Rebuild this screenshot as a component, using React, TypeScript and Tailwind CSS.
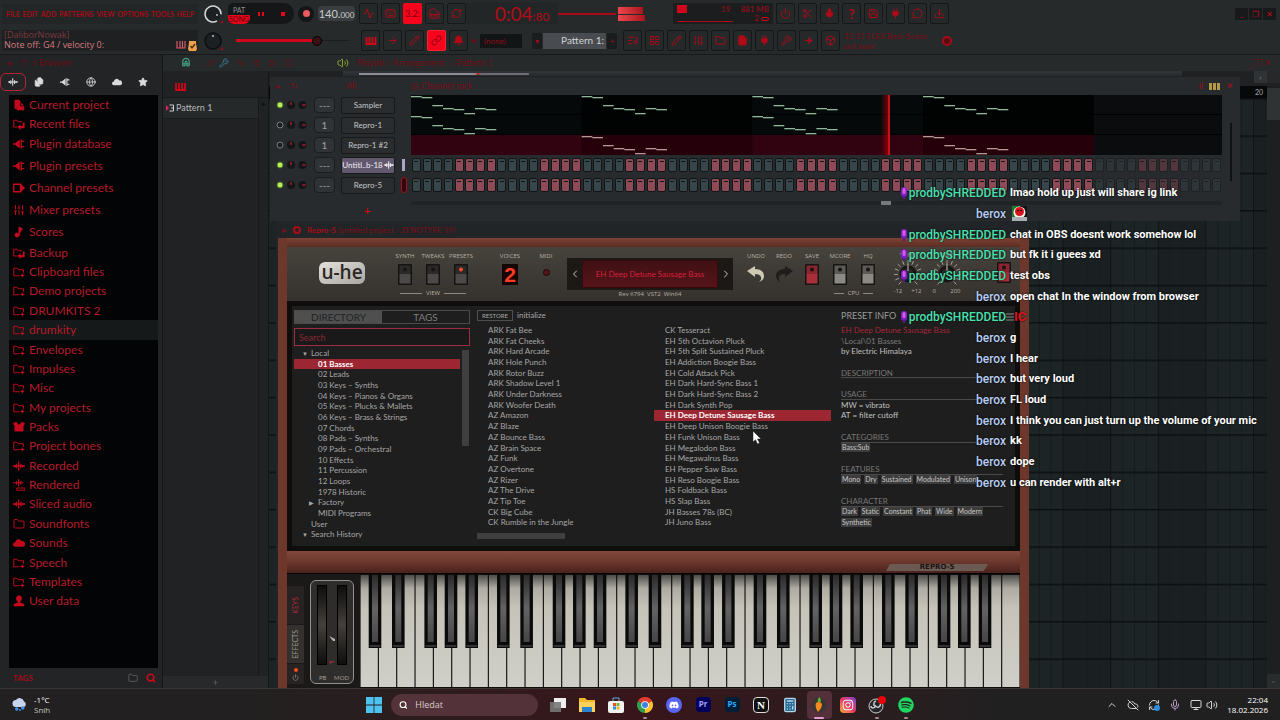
import React from 'react';
import type { ComponentType, ReactNode } from 'react';
import {
  Activity, ArrowRight, Bell, Box, Calculator, ChevronLeft, ChevronRight, ChevronUp, CloudOff,
  Download, File, Files, Folder, Globe, HelpCircle, Keyboard, LayoutGrid,
  Link, ListMusic, Magnet, MessageCircle, Mic, Monitor, Music2, Pencil, Piano, Plug, Power,
  Redo2, RefreshCw, Save, Scissors, Search, SlidersVertical, Square, Star, Undo2, Volume2, Wrench,
} from 'lucide-react';
import { FaDiscord, FaInstagram, FaSpotify } from 'react-icons/fa';

type Icon = ComponentType<{ className?: string }>;

interface BrowserItem {
  name: string;
  icon: Icon;
  solid?: boolean;
}

interface ChatLine {
  user: 'prodbySHREDDED' | 'berox';
  text?: string;
  extra?: 'emote' | 'glitch';
}

/* ---------- icons ---------- */

function KeysIcon({ className }: { className?: string }) {
  return (
    <svg viewBox="0 0 11 8" className={className}>
      <path d="M1 0v7h9V0M4 0v6M7 0v6" fill="none" stroke="currentColor" strokeWidth="1.800" />
    </svg>
  );
}

function WaveIcon({ className }: { className?: string }) {
  return (
    <svg viewBox="0 0 16 16" className={className}>
      <path d="M0 8h16M4.500 5v6M7.500 2v12M10.500 5v6M13 6.500v3M2.500 6.500v3" fill="none" stroke="currentColor" strokeWidth="1.700" />
    </svg>
  );
}

function RenderedIcon({ className }: { className?: string }) {
  return (
    <svg viewBox="0 0 16 16" className={className}>
      <path d="M0 5h14M4.500 2.500v5M7.500 0v10M10.500 2.500v5" fill="none" stroke="currentColor" strokeWidth="1.500" />
      <path d="M5 12h11v3H5z" fill="none" stroke="currentColor" strokeWidth="1.300" />
    </svg>
  );
}

function FolderMarkIcon({ className }: { className?: string }) {
  return (
    <svg viewBox="0 0 16 16" className={className}>
      <path d="M8.500 13H1V3h4.500L7 5h7v4" fill="none" stroke="currentColor" strokeWidth="1.300" />
      <path d="M12.500 10v5M10 12.500h5" stroke="currentColor" strokeWidth="1.400" />
    </svg>
  );
}

function FolderReturnIcon({ className }: { className?: string }) {
  return (
    <svg viewBox="0 0 16 16" className={className}>
      <path d="M6 12H1V3h4.500L7 5h5" fill="none" stroke="currentColor" strokeWidth="1.300" />
      <path d="M6 12l4-4v2.500h3V6h2.500v7.500H10V16z" fill="currentColor" />
    </svg>
  );
}

function PluginIcon({ className }: { className?: string }) {
  return (
    <svg viewBox="0 0 16 16" className={className}>
      <path d="M0 7h3l6-5v12L3 9H0z" fill="currentColor" />
      <path d="M11 2v12M11 4.500h4M11 11.500h4" fill="none" stroke="currentColor" strokeWidth="1.800" />
    </svg>
  );
}

function ChannelIcon({ className }: { className?: string }) {
  return (
    <svg viewBox="0 0 16 16" className={className}>
      <path d="M1 3h9v10H1z" fill="none" stroke="currentColor" strokeWidth="1.800" />
      <path d="M10 2l6 6-6 6z" fill="currentColor" />
    </svg>
  );
}

function PackIcon({ className }: { className?: string }) {
  return (
    <svg viewBox="0 0 16 16" className={className}>
      <path d="M0 3l4-2 4 4 4-4 4 2-2 4v7H2V7z" fill="currentColor" />
    </svg>
  );
}

function CloudIcon({ className }: { className?: string }) {
  return (
    <svg viewBox="0 0 16 16" className={className}>
      <path d="M3 13a3 3 0 010-6 4.500 4.500 0 018.500-1.500A3.800 3.800 0 0113 13z" fill="currentColor" />
    </svg>
  );
}

function UserIcon({ className }: { className?: string }) {
  return (
    <svg viewBox="0 0 16 16" className={className}>
      <circle cx="8" cy="4.500" r="3.800" fill="currentColor" />
      <path d="M6.500 7h3v3l5.500 2v3H1v-3l5.500-2z" fill="currentColor" />
    </svg>
  );
}

function PageIcon({ className }: { className?: string }) {
  return (
    <svg viewBox="0 0 16 16" className={className}>
      <path d="M2 1h6l2 2v2h1l4 4v6H5v-2H2z" fill="currentColor" />
      <path d="M10 5v4h5" fill="none" stroke="#030405" strokeWidth="1" />
    </svg>
  );
}

const mainFolders: BrowserItem[] = [
  { name: 'Plugin database', icon: PluginIcon },
  { name: 'Plugin presets', icon: PluginIcon },
  { name: 'Channel presets', icon: ChannelIcon },
  { name: 'Mixer presets', icon: SlidersVertical },
  { name: 'Scores', icon: Music2, solid: true },
];

const userFolders: BrowserItem[] = [
  { name: 'Backup', icon: FolderReturnIcon },
  { name: 'Clipboard files', icon: FolderMarkIcon },
  { name: 'Demo projects', icon: FolderMarkIcon },
  { name: 'DRUMKITS 2', icon: FolderMarkIcon },
  { name: 'drumkity', icon: FolderMarkIcon },
  { name: 'Envelopes', icon: FolderMarkIcon },
  { name: 'Impulses', icon: FolderMarkIcon },
  { name: 'Misc', icon: FolderMarkIcon },
  { name: 'My projects', icon: FolderMarkIcon },
  { name: 'Packs', icon: PackIcon },
  { name: 'Project bones', icon: FolderMarkIcon },
  { name: 'Recorded', icon: WaveIcon },
  { name: 'Rendered', icon: RenderedIcon },
  { name: 'Sliced audio', icon: WaveIcon },
  { name: 'Soundfonts', icon: Folder },
  { name: 'Sounds', icon: CloudIcon },
  { name: 'Speech', icon: FolderMarkIcon },
  { name: 'Templates', icon: FolderMarkIcon },
  { name: 'User data', icon: UserIcon },
];

const directory = [
  '01 Basses', '02 Leads', '03 Keys – Synths', '04 Keys – Pianos & Organs', '05 Keys – Plucks & Mallets',
  '06 Keys – Brass & Strings', '07 Chords', '08 Pads – Synths', '09 Pads – Orchestral', '10 Effects',
  '11 Percussion', '12 Loops', '1978 Historic',
];

const presetsLeft = [
  'ARK Fat Bee', 'ARK Fat Cheeks', 'ARK Hard Arcade', 'ARK Hole Punch', 'ARK Rotor Buzz', 'ARK Shadow Level 1',
  'ARK Under Darkness', 'ARK Woofer Death', 'AZ Amazon', 'AZ Blaze', 'AZ Bounce Bass', 'AZ Brain Space',
  'AZ Funk', 'AZ Overtone', 'AZ Rizer', 'AZ The Drive', 'AZ Tip Toe', 'CK Big Cube', 'CK Rumble in the Jungle',
];

const presetsRight = [
  'CK Tesseract', 'EH 5th Octavion Pluck', 'EH 5th Split Sustained Pluck', 'EH Addiction Boogie Bass',
  'EH Cold Attack Pick', 'EH Dark Hard-Sync Bass 1', 'EH Dark Hard-Sync Bass 2', 'EH Dark Synth Pop',
  'EH Deep Detune Sausage Bass', 'EH Deep Unison Boogie Bass', 'EH Funk Unison Bass', 'EH Megalodon Bass',
  'EH Megawalrus Bass', 'EH Pepper Saw Bass', 'EH Reso Boogie Bass', 'HS Foldback Bass', 'HS Slap Bass',
  'JH Basses 78s (BC)', 'JH Juno Bass',
];

const chat: ChatLine[] = [
  { user: 'prodbySHREDDED', text: 'lmao hold up just will share ig link' },
  { user: 'berox', extra: 'emote' },
  { user: 'prodbySHREDDED', text: 'chat in OBS doesnt work somehow lol' },
  { user: 'prodbySHREDDED', text: 'but fk it i guees xd' },
  { user: 'prodbySHREDDED', text: 'test obs' },
  { user: 'berox', text: 'open chat In the window from browser' },
  { user: 'prodbySHREDDED', extra: 'glitch' },
  { user: 'berox', text: 'g' },
  { user: 'berox', text: 'I hear' },
  { user: 'berox', text: 'but very loud' },
  { user: 'berox', text: 'FL loud' },
  { user: 'berox', text: 'I think you can just turn up the volume of your mic' },
  { user: 'berox', text: 'kk' },
  { user: 'berox', text: 'dope' },
  { user: 'berox', text: 'u can render with alt+r' },
];

/* ---------- toolbar ---------- */

function ToolButton({ label, icon: Glyph, active = false, solid = false }: { label: string; icon: Icon; active?: boolean; solid?: boolean }) {
  return (
    <button
      aria-label={label}
      className={`flex h-[21px] w-[19px] shrink-0 items-center justify-center rounded-xs border ${
        active ? 'border-[#ff2233] bg-[#f5041c] text-[#7a0010]' : 'border-[#151718] bg-[#25292a] text-[#b00a18]'
      }`}
    >
      <Glyph className={`size-[11px] ${solid ? 'fill-current' : ''}`} />
    </button>
  );
}

function RoundKnob({ bright = false }: { bright?: boolean }) {
  return (
    <div className="flex w-[30px] shrink-0 justify-center">
      <svg viewBox="0 0 22 22" className="size-[22px]">
        <circle cx="11" cy="11" r="8" fill="#1d2022" stroke={bright ? '#d4d8da' : '#0d0f10'} strokeWidth="1.6" strokeDasharray={bright ? '42 9' : undefined} transform="rotate(60 11 11)" />
        <circle cx={bright ? 15 : 11} cy={bright ? 12 : 6} r="0.9" fill="#c9cdd0" />
        <path d="M18 20l3-3v3z" fill="#a40b17" />
      </svg>
    </div>
  );
}

function Toolbar() {
  return (
    <header className="flex h-[55px] shrink-0 flex-col justify-center gap-1.5 border-b border-[#17191a] bg-[#272a2b] text-[#a30c18]">
      <div className="flex h-[21px] items-center">
        <nav className="ml-0.5 flex w-[196px] shrink-0 justify-between bg-[#232627] py-0.5 pr-1 pl-1 text-[7px] leading-4 font-bold">
          {['FILE', 'EDIT', 'ADD', 'PATTERNS', 'VIEW', 'OPTIONS', 'TOOLS', 'HELP'].map((item) => (
            <a key={item} href="#menu" className="text-[#a30c18]">{item}</a>
          ))}
        </nav>
        <RoundKnob bright />
        <div className="flex h-[21px] w-[66px] shrink-0 items-stretch rounded-l-md rounded-r-xl bg-[#151617]">
          <button className="flex w-[22px] flex-col justify-end text-center text-[7px] leading-[9px]">
            <span className="text-[#8d8f91]">PAT</span>
            <span className="rounded-b-md bg-[#e3061b] text-[#6b0009]">SONG</span>
          </button>
          <button aria-label="Pause" className="flex flex-1 items-center justify-center gap-0.5">
            <span className="h-1 w-0.5 bg-[#e3061b]" />
            <span className="h-1 w-0.5 bg-[#e3061b]" />
          </button>
          <button aria-label="Stop" className="flex flex-1 items-center justify-center">
            <span className="size-1 bg-[#e3061b]" />
          </button>
        </div>
        <button aria-label="Record" className="mx-1 flex size-4 shrink-0 items-center justify-center rounded-full bg-[#141516]">
          <span className="size-[7px] rounded-full bg-[#ef5a62]" />
        </button>
        <div className="mr-1 flex h-[15px] w-[37px] shrink-0 items-baseline justify-center rounded-sm bg-[#3b3e40] text-[11px] leading-[15px] text-[#c9cccd]">
          140.<span className="text-[8px]">000</span>
        </div>
        <div className="flex w-[107px] shrink-0 gap-[3px]">
          <ToolButton label="Metronome" icon={Activity} />
          <ToolButton label="Wait for input" icon={Keyboard} />
          <button className="flex h-[21px] w-[19px] items-center justify-center rounded-xs bg-[#f5041c] text-[9px] text-[#7a0010]">3.2:</button>
          <ToolButton label="Step edit" icon={Piano} />
          <ToolButton label="Loop record" icon={RefreshCw} />
        </div>
        <div className="flex h-[21px] w-[92px] shrink-0 items-baseline justify-center bg-[#222627] pl-5 text-[19px] leading-[21px] text-[#b50b18]">
          0:04<span className="text-xs">:80</span>
        </div>
        <div className="flex w-[115px] shrink-0 items-center">
          <div className="h-0.5 w-[58px] bg-[#a50b16]" />
          <div className="ml-0.5 flex flex-col gap-px">
            <div className="h-[7px] w-[25px] bg-gradient-to-r from-[#f0464c] to-[#a8141e]" />
            <div className="h-[6px] w-[27px] bg-gradient-to-r from-[#f0464c] to-[#a8141e]" />
          </div>
        </div>
        <div className="relative mr-[3px] flex h-[21px] w-[100px] shrink-0 items-start justify-between bg-[#1b1d1f] px-1 py-0.5 text-[8px] leading-[9px]">
          <span className="h-2 w-2.5 bg-[#d0061a]" />
          <span className="ml-6">19</span>
          <span className="text-right">881 MB<br />2 <span className="inline-block h-1 w-2 rounded-full border border-[#d0061a]" /></span>
          <span className="absolute bottom-0.5 left-1 h-px w-14 bg-[#b00a18]" />
        </div>
        <div className="flex shrink-0 gap-[3px]">
          <ToolButton label="Power" icon={Power} />
          <ToolButton label="Cut" icon={Scissors} />
          <ToolButton label="Microphone" icon={Mic} solid />
          <button className="flex h-[21px] w-[19px] items-center justify-center rounded-xs border border-[#151718] bg-[#25292a] text-[13px] leading-4 font-bold text-[#b00a18]">?</button>
          <ToolButton label="Save" icon={Save} />
          <ToolButton label="Render" icon={Plug} solid />
          <ToolButton label="Chat" icon={MessageCircle} />
          <ToolButton label="Download" icon={Download} />
        </div>
        <div className="mr-1 ml-auto flex gap-px">
          {['_', '❐', '✕'].map((glyph) => (
            <button key={glyph} className="flex h-3 w-[13px] items-center justify-center bg-[#17191a] text-[8px] text-[#c00b1a]">{glyph}</button>
          ))}
        </div>
      </div>

      <div className="flex h-[21px] items-center">
        <div className="relative ml-0.5 h-[21px] w-[196px] shrink-0 bg-[#1e2021] pl-0.5 text-[9px] leading-[10px] [font-family:'Open_Sans',sans-serif]">
          <p className="text-[#7c3940]">[DaliborNowak]</p>
          <p className="text-[#d67b81]">Note off: G4 / velocity 0:</p>
          <svg viewBox="0 0 22 14" className="absolute right-0 bottom-0 h-3.5 w-[22px]">
            <path d="M1 4v7h8V4M4 4v7M6.500 4v7" fill="none" stroke="#d65a68" strokeWidth="1.2" />
            <path d="M13 4h7v2l1 6-1 2h-7l-1-2 1-6z" fill="#f0a04a" />
            <path d="M14.500 9l1.500 2 3-4" fill="none" stroke="#4a2a12" strokeWidth="1.300" />
          </svg>
        </div>
        <RoundKnob />
        <label className="relative mr-1 flex h-[21px] w-[129px] shrink-0 items-center px-2">
          <input aria-label="Main volume" type="range" defaultValue={70} className="absolute inset-0 opacity-0" />
          <span className="h-[3px] w-[76px] bg-[#d0061a]" />
          <span className="size-2.5 rounded-full border border-black bg-[#3a1216]" />
          <span className="h-px flex-1 bg-[#1a1c1d]" />
        </label>
        <div className="flex w-[107px] shrink-0 gap-[3px]">
          <button aria-label="Piano roll keys" className="flex h-[21px] w-[19px] items-center justify-center rounded-xs border border-[#151718] bg-[#25292a] text-[#d0061a]">
            <KeysIcon className="h-2 w-3" />
          </button>
          <ToolButton label="Forward" icon={ArrowRight} />
          <ToolButton label="Draw" icon={Pencil} />
          <ToolButton label="Link" icon={Link} active />
          <ToolButton label="Stamp" icon={Bell} solid />
        </div>
        <div className="mx-1 flex w-14 shrink-0 items-center gap-1">
          <span className="size-1 rounded-full bg-[#6a0a12]" />
          <select aria-label="Snap" className="h-3.5 w-[42px] appearance-none bg-[#131415] pl-1 text-[8px] leading-[14px] text-[#8d0c16]">
            <option>(none)</option>
          </select>
        </div>
        <button className="h-4 w-[10px] shrink-0 rounded-xs bg-[#1a1c1e] text-[8px]">▾</button>
        <button className="mx-px flex h-4 w-[63px] shrink-0 items-center justify-end bg-[#484b4f] pr-0.5 text-[10px] text-[#cfd2d4]">Pattern 1:</button>
        <button className="h-4 w-[10px] shrink-0 rounded-xs bg-[#1a1c1e] text-[8px]">+</button>
        <div className="ml-1.5 flex shrink-0 gap-[3px]">
          <ToolButton label="Playlist" icon={ListMusic} />
          <ToolButton label="Channel rack" icon={LayoutGrid} />
          <ToolButton label="Piano roll" icon={Pencil} />
          <ToolButton label="Mixer" icon={SlidersVertical} />
          <ToolButton label="Browser" icon={Folder} />
          <ToolButton label="Open" icon={File} solid />
          <ToolButton label="Plugins" icon={Plug} solid />
          <ToolButton label="Tools" icon={Wrench} />
          <ToolButton label="Touch" icon={ArrowRight} solid />
          <ToolButton label="Close all" icon={Box} />
        </div>
        <div className="ml-1 flex w-[108px] shrink-0 items-center justify-between text-[8px] leading-[10px] text-[#7c0b15]">
          <p>12.11 FLEX Beat-Scene<br />out now!</p>
          <span className="size-2.5 rounded-full border-2 border-[#a30c18] bg-[#5a0a12]" />
        </div>
      </div>
    </header>
  );
}

/* ---------- browser ---------- */

function FolderRow({ item, selected = false }: { item: BrowserItem; selected?: boolean }) {
  const Glyph = item.icon;
  return (
    <button className={`flex w-full items-center gap-1 pl-1 text-left text-xs leading-4 ${selected ? 'bg-[#16191a]' : ''}`}>
      <Glyph className={`size-3 shrink-0 text-[#c20a1c] ${item.solid ? 'fill-current' : ''}`} />
      {item.name}
    </button>
  );
}

function Browser() {
  const tabs: Icon[] = [WaveIcon, Files, PluginIcon, Globe, CloudIcon, Star];
  return (
    <aside className="flex w-[163px] shrink-0 flex-col border-r border-[#141617] bg-[#222426] text-[#b51b2a]">
      <div className="h-4 shrink-0 pl-2 text-[9px] leading-4 text-[#6b0c14]">▸ &nbsp; ↑ &nbsp;≡ Browser</div>
      <div className="flex h-6 shrink-0 items-center pb-0.5">
        {tabs.map((Glyph, i) => (
          <button
            key={i}
            aria-label={`Tab ${i + 1}`}
            className={`flex h-[18px] w-[26px] items-center justify-center text-[#d9dbdc] ${i === 0 ? 'rounded-md border border-[#b52436]' : ''}`}
          >
            <Glyph className={`size-2.5 ${Glyph === Files || Glyph === Star ? 'fill-current' : ''}`} />
          </button>
        ))}
      </div>
      <div className="mr-1 ml-[9px] min-h-0 flex-1 overflow-hidden bg-[#030405]">
        <div className="grid h-[38px] auto-rows-fr">
          <FolderRow item={{ name: 'Current project', icon: PageIcon }} />
          <FolderRow item={{ name: 'Recent files', icon: FolderReturnIcon }} />
        </div>
        <div className="grid h-[110px] auto-rows-fr">
          {mainFolders.map((item) => <FolderRow key={item.name} item={item} />)}
        </div>
        <div className="grid h-[368px] auto-rows-fr">
          {userFolders.map((item) => <FolderRow key={item.name} item={item} selected={item.name === 'drumkity'} />)}
        </div>
      </div>
      <div className="mr-1 ml-[9px] flex h-5 shrink-0 items-center gap-2 pl-1 text-[8px]">
        <span className="mr-auto font-bold text-[#a30c18]">TAGS</span>
        <Folder className="size-2.5 text-[#606466]" />
        <Search className="mr-0.5 size-2.5 text-[#d0061a]" strokeWidth={4} />
      </div>
    </aside>
  );
}

function PatternPicker() {
  return (
    <section className="flex w-[106px] shrink-0 flex-col border-r border-[#141617] bg-[#202224]">
      <div className="flex h-[27px] shrink-0 items-end border-b border-[#17191a] pb-1.5 pl-3 text-[#d0061a]">
        <KeysIcon className="h-2 w-[11px]" />
      </div>
      <div className="flex min-h-0 flex-1">
        <div className="flex-1">
          <div className="flex h-[21px] items-center gap-0.5 border-b border-[#1a1c1d] bg-[#26292a] pl-[3px] text-[9px] text-[#b4b7b9]">
            <svg viewBox="0 0 8 8" className="size-2">
              <path d="M0 1l3 3-3 3z" fill="#e0245a" />
              <path d="M3.500 1h4v6h-4M5 4h2" fill="none" stroke="#d0d0d0" />
            </svg>
            Pattern 1
          </div>
        </div>
        <div className="w-2.5 border-l border-[#17191a] text-center text-[7px] text-[#0c0d0e]">▸</div>
      </div>
      <div className="h-3 shrink-0 bg-[#27292b] text-center text-[10px] leading-3 text-[#616466]">+</div>
    </section>
  );
}

/* ---------- channel rack ---------- */

const STEP = 32 / 3;
const noteHeights = [1, 2, 10, 13, 14, 18, 13, 14];

function RackPreview() {
  const rows = [[0, 16, 32, 48], [0, 32], [16, 48]];
  return (
    <svg viewBox="0 0 811 60" preserveAspectRatio="none" className="block h-[60px] w-full">
      <rect width="811" height="60" fill="#0a0c0e" />
      {[0, 1, 2, 3].map((bar) => (
        <g key={bar}>
          <rect x={bar * 170.67} width="170.67" height="39" fill={bar % 2 ? '#010202' : '#06090a'} />
          <rect x={bar * 170.67} y="40" width="170.67" height="20" fill={bar % 2 ? '#25000a' : '#31020f'} />
        </g>
      ))}
      <path d="M0 19.500h811M0 39.500h811" stroke="#000" />
      {rows.map((starts, row) =>
        starts.map((start) =>
          noteHeights.map((y, i) => (
            <rect key={`${row}-${start}-${i}`} x={(start + i) * STEP} y={row * 20 + y} width={STEP} height="1.300" fill={row === 2 ? '#b59a94' : '#8fb89a'} />
          )),
        ),
      )}
      <defs>
        <linearGradient id="playhead">
          <stop offset="0" stopColor="#d00000" stopOpacity="0" />
          <stop offset="1" stopColor="#d00000" stopOpacity="0.6" />
        </linearGradient>
      </defs>
      <rect x="470" width="8" height="60" fill="url(#playhead)" />
      <rect x="477" width="2" height="60" fill="#c8101a" />
    </svg>
  );
}

function StepRow() {
  return (
    <div className="flex h-5 items-center">
      {Array.from({ length: 76 }, (_, i) => {
        const red = Math.floor(i / 4) % 2 === 1;
        return (
          <div key={i} className={`flex flex-1 justify-center ${i >= 64 ? 'opacity-40' : ''}`}>
            <button
              aria-label={`Step ${i + 1}`}
              className={`flex h-3.5 w-[9px] justify-center rounded-xs border border-[#121415] pt-0.5 ${red ? 'bg-[#8f4a57]' : 'bg-[#37464a]'}`}
            >
              <span className="h-px w-1 bg-[#121415]" />
            </button>
          </div>
        );
      })}
    </div>
  );
}

function ChannelRow({ name, on, target, audio = false }: { name: string; on: boolean; target: string; audio?: boolean }) {
  return (
    <div className="flex h-5 items-center">
      <svg viewBox="0 0 38 14" className="ml-1.5 h-3.5 w-[38px] shrink-0">
        <circle cx="4" cy="7" r="3" fill={on ? '#b9ef56' : '#1d1f21'} stroke={on ? '#48702a' : '#777b7d'} />
        <circle cx="15" cy="7" r="4" fill="#151618" />
        <path d="M15 7V4" stroke="#d81b2c" strokeWidth="1.200" />
        <circle cx="26.500" cy="7" r="4" fill="#151618" />
        <path d="M26.500 7h3" stroke="#d81b2c" strokeWidth="1.200" />
      </svg>
      <span className="flex h-4 w-[21px] shrink-0 items-center justify-center rounded-sm border border-[#1a1c1d] bg-[#303335] text-[10px] text-[#9ea1a3]">{target}</span>
      <button
        className={`ml-1.5 flex h-[17px] w-[54px] shrink-0 items-center justify-center gap-px rounded-xs border border-[#17191a] text-[8px] whitespace-nowrap ${
          audio ? 'bg-[#62596f] text-[#eeebf3]' : 'bg-[#2a2c2e] text-[#c2c5c7]'
        }`}
      >
        {name}
        {audio && <WaveIcon className="size-2.5" />}
      </button>
    </div>
  );
}

function ChannelRack() {
  return (
    <section className="absolute top-1.5 left-px z-10 h-[144px] w-[970px] bg-[#282b2d]">
      <div className="flex h-[18px] items-center text-[9px] text-[#7a0e18]">
        <span className="w-[76px] pl-1.5">▸ &nbsp;&nbsp; ↻</span>
        <span className="w-[65px]">All</span>
        <span>◎ Channel rack</span>
        <span className="mr-1.5 ml-auto flex items-center gap-1.5 text-[#a30c18]">
          ıl
          <svg viewBox="0 0 11 7" className="h-[7px] w-[11px]">
            <path d="M0 0h3v7H0zM4 0h3v7H4zM8 0h3v7H8z" fill="#b59a45" />
          </svg>
          ✕
        </span>
      </div>
      <div className="flex">
        <div className="w-[130px] shrink-0">
          <ChannelRow name="Sampler" on target="---" />
          <ChannelRow name="Repro-1" on={false} target="1" />
          <ChannelRow name="Repro-1 #2" on={false} target="1" />
          <ChannelRow name="Untitl..b-18" on target="---" audio />
          <ChannelRow name="Repro-5" on target="---" />
        </div>
        <div className="flex w-[11px] shrink-0 flex-col items-center pt-16">
          <span className="mr-1 h-3 w-[3px] bg-[#aaa5c4]" />
          <span className="mt-1.5 mr-1 h-4 w-1.5 rounded-sm border border-[#a01320] bg-[#33070d]" />
        </div>
        <div className="min-w-0 flex-1">
          <RackPreview />
          <StepRow />
          <StepRow />
          <div className="mt-1.5 h-1 bg-[#212325]">
            <div className="ml-[58%] h-1 w-2.5 bg-[#77797b]" />
          </div>
        </div>
        <div className="flex w-[18px] shrink-0 justify-center pt-7">
          <span className="h-[58px] w-0.5 bg-[#111213]" />
        </div>
      </div>
      <div className="pl-[94px] text-[11px] leading-3 font-bold text-[#d00a18]">+</div>
    </section>
  );
}

/* ---------- synth window ---------- */

function Switch({ label, tone = 'dark', lit = false }: { label: string; tone?: 'dark' | 'light' | 'red'; lit?: boolean }) {
  const body = tone === 'dark' ? '#4b4a48' : tone === 'light' ? '#8b8983' : '#a82e3a';
  const top = tone === 'dark' ? '#2b2a29' : tone === 'light' ? '#5c5a56' : '#8a2530';
  return (
    <button className="flex w-7 flex-col items-center gap-0.5 text-[6px] leading-[10px] text-[#b5b1a7]">
      {label}
      <svg viewBox="0 0 14 21" className="mt-px h-[21px] w-3.5">
        <rect width="14" height="21" rx="1" fill="#151412" />
        <rect x="1.500" y="1.500" width="11" height="9" fill={top} />
        <rect x="1.500" y="10" width="11" height="9.500" fill={body} />
        <circle cx="7" cy="5.500" r="2" fill={lit ? '#ff4a26' : '#161514'} />
      </svg>
    </button>
  );
}

function Rule({ text, className }: { text: string; className: string }) {
  return (
    <div className={`flex items-center gap-1 text-[6px] leading-[8px] text-[#b5b1a7] ${className}`}>
      <span className="h-px flex-1 bg-[#8d897f]" />
      {text}
      <span className="h-px flex-1 bg-[#8d897f]" />
    </div>
  );
}

function DialKnob({ label, low, high }: { label: string; low: string; high: string }) {
  return (
    <div className="flex w-[39px] flex-col items-center text-[6px] leading-[8px] text-[#b5b1a7]">
      <span>{label}</span>
      <svg viewBox="0 0 30 28" className="h-7 w-[30px]">
        {Array.from({ length: 13 }, (_, i) => (
          <path key={i} d="M15 1v4" stroke="#b5b0a5" strokeWidth="0.800" transform={`rotate(${-138 + i * 23} 15 15)`} />
        ))}
        <circle cx="15" cy="15" r="8.500" fill="#191817" />
        <circle cx="15" cy="15" r="5.500" fill="#2b2a28" />
        <path d="M15 12V5" stroke="#c8c3b8" />
      </svg>
      <span className="flex w-7 justify-between"><span>{low}</span><span>{high}</span></span>
    </div>
  );
}

function CurvedArrow({ className }: { className: string }) {
  return (
    <svg viewBox="0 0 18 18" className={`size-[18px] ${className}`}>
      <path d="M0 6l8-5v3c6 0 9 3 9 7 0 3-2 5-5 6 2-2 2.500-3 2-5-.6-2-3-3-6-3v3z" fill="currentColor" />
    </svg>
  );
}

function SynthPanel() {
  return (
    <div className="flex h-[54px] shrink-0 items-start bg-gradient-to-b from-[#46423c] to-[#35312d] pt-1 [font-family:'Open_Sans',sans-serif]">
      <div className="mt-[11px] ml-8 flex h-[22px] w-[46px] shrink-0 items-center justify-center rounded-md bg-gradient-to-br from-[#e2e0db] to-[#a9a6a0] pb-0.5 text-[19px] leading-5 font-semibold text-[#2b2825]">
        u-he
      </div>
      <div className="ml-[26px] shrink-0">
        <div className="flex">
          <Switch label="SYNTH" />
          <Switch label="TWEAKS" />
          <Switch label="PRESETS" lit />
        </div>
        <Rule text="VIEW" className="mx-[9px] mt-1" />
      </div>
      <div className="ml-5 flex w-[30px] shrink-0 flex-col items-center gap-[3px] text-[6px] leading-[10px] text-[#b5b1a7]">
        VOICES
        <span className="flex h-[21px] w-4 items-center justify-center bg-[#150505] text-[21px] leading-5 font-bold text-[#ff3b22] [font-family:'Liberation_Sans',sans-serif]">2</span>
      </div>
      <div className="ml-1.5 flex w-[30px] shrink-0 flex-col items-center gap-2 text-[6px] leading-[10px] text-[#b5b1a7]">
        MIDI
        <span className="size-[7px] rounded-full border border-[#1a0808] bg-[#5a151b]" />
      </div>
      <div className="mt-[7px] ml-1.5 w-[166px] shrink-0 text-center">
        <div className="flex h-[32px] items-center bg-[#1b1816] text-[#c9c5bc]">
          <button aria-label="Previous preset" className="flex w-[15px] justify-center"><ChevronLeft className="size-3" /></button>
          <div className="flex h-7 flex-1 items-center justify-center border border-[#37090d] bg-gradient-to-b from-[#401014] to-[#561419] text-[8px] text-[#d81f3c] [font-family:'Lato',sans-serif]">
            EH Deep Detune Sausage Bass
          </div>
          <button aria-label="Next preset" className="flex w-[15px] justify-center"><ChevronRight className="size-3" /></button>
        </div>
        <p className="text-[6px] leading-[8px] text-[#b5b1a7]">Rev 6794 &nbsp;VST2 &nbsp;Win64</p>
      </div>
      <div className="ml-[9px] flex shrink-0 text-[6px] leading-[10px] text-[#b5b1a7]">
        <button className="flex w-7 flex-col items-center gap-1">UNDO<CurvedArrow className="text-[#cfc8b4]" /></button>
        <button className="flex w-7 flex-col items-center gap-1">REDO<CurvedArrow className="-scale-x-100 text-[#1f1d1b]" /></button>
      </div>
      <div className="shrink-0">
        <div className="flex">
          <Switch label="SAVE" tone="red" />
          <Switch label="MCORE" tone="light" />
          <Switch label="HQ" tone="light" />
        </div>
        <Rule text="CPU" className="mt-1 mr-[9px] ml-9" />
      </div>
      <div className="ml-1.5 flex shrink-0">
        <DialKnob label="TUNE" low="-12" high="+12" />
        <DialKnob label="FINE" low="0" high="200" />
      </div>
      <div className="ml-6 pt-2.5">
        <Switch label="" tone="red" />
      </div>
    </div>
  );
}

function Chips({ items }: { items: string[] }) {
  return (
    <div className="flex items-center gap-[3px]">
      {items.map((item) => (
        <span key={item} className="bg-[#3c3c3c] px-px text-[7px] leading-[9px] text-[#c6c6c6]">{item}</span>
      ))}
    </div>
  );
}

function InfoHeading({ children }: { children: ReactNode }) {
  return <h3 className="w-[162px] border-b border-[#4a4a4a] text-[8px] text-[#777]">{children}</h3>;
}

function PresetInfo() {
  return (
    <div className="ml-2.5 flex-1">
      <h2 className="h-[15px] text-[9px] leading-3 text-[#999]">PRESET INFO</h2>
      <div className="grid h-[203px] auto-rows-fr text-[8px] leading-[10px] whitespace-nowrap text-[#c0c0c0]">
        <p className="text-[#a82639]">EH Deep Detune Sausage Bass</p>
        <p className="text-[#7a7a7a]">\Local\01 Basses</p>
        <p>by Electric Himalaya</p>
        <p />
        <InfoHeading>DESCRIPTION</InfoHeading>
        <p />
        <InfoHeading>USAGE</InfoHeading>
        <p>MW = vibrato</p>
        <p>AT = filter cutoff</p>
        <p />
        <InfoHeading>CATEGORIES</InfoHeading>
        <Chips items={['Bass:Sub']} />
        <p />
        <InfoHeading>FEATURES</InfoHeading>
        <Chips items={['Mono', 'Dry', 'Sustained', 'Modulated', 'Unison']} />
        <p />
        <InfoHeading>CHARACTER</InfoHeading>
        <Chips items={['Dark', 'Static', 'Constant', 'Phat', 'Wide', 'Modern']} />
        <Chips items={['Synthetic']} />
      </div>
    </div>
  );
}

function PresetColumn({ items, selected }: { items: string[]; selected?: string }) {
  return (
    <ul className="grid h-[203px] w-[177px] auto-rows-fr">
      {items.map((item) => (
        <li key={item} className={`pl-[11px] ${item === selected ? 'bg-[#9c2733] font-bold text-white' : ''}`}>{item}</li>
      ))}
    </ul>
  );
}

function PresetBrowser() {
  return (
    <div className="flex min-h-0 flex-1 border-[5px] border-[#0e0d0c] bg-[#1e1e1e] pt-1 pl-0.5 text-[8px] leading-[10px] text-[#a6a6a6] [font-family:'Lato',sans-serif]">
      <div className="w-44 shrink-0">
        <div className="flex h-3.5 border border-[#4b4b4b] text-[10px] leading-3">
          <button className="flex-1 bg-[#4f4f4f] text-[#222]">DIRECTORY</button>
          <button className="flex-1 text-[#7d7d7d]">TAGS</button>
        </div>
        <input aria-label="Search presets" placeholder="Search" className="mt-1 block h-[18px] w-full border border-[#9c2c42] bg-[#191919] px-1 text-[9px] leading-4 outline-none placeholder:text-[#8c2638]" />
        <div className="mt-0.5 flex">
          <ul className="grid h-[192px] w-[166px] auto-rows-fr">
            <li className="pl-2"><span className="inline-block w-[9px] text-[6px]">▼</span>Local</li>
            {directory.map((item, i) => (
              <li key={item} className={`pl-6 ${i === 0 ? 'bg-[#9c2733] font-bold text-white' : ''}`}>{item}</li>
            ))}
            <li className="pl-[15px]"><span className="inline-block w-[9px] text-[6px]">▶</span>Factory</li>
            <li className="pl-6">MIDI Programs</li>
            <li className="pl-[17px]">User</li>
            <li className="pl-2"><span className="inline-block w-[9px] text-[6px]">▼</span>Search History</li>
          </ul>
          <div className="mt-0.5 ml-0.5 h-24 w-[7px] bg-[#3f3f3f]" />
        </div>
      </div>
      <div className="ml-[7px] shrink-0">
        <div className="flex h-[15px] items-start gap-1">
          <button className="h-[11px] w-9 border border-[#4f4f4f] text-[6px] leading-[9px]">RESTORE</button>
          initialize
        </div>
        <div className="flex">
          <PresetColumn items={presetsLeft} />
          <PresetColumn items={presetsRight} selected="EH Deep Detune Sausage Bass" />
        </div>
        <div className="mt-[5px] h-[6px] w-[88px] bg-[#3f3f3f]" />
      </div>
      <PresetInfo />
    </div>
  );
}

const OCTAVE = 128.33;
const blackOffsets = [15, 38.3, 70.7, 91, 111.7];

function PianoKeys() {
  return (
    <svg viewBox="0 0 660 114" preserveAspectRatio="none" className="h-full min-w-0 flex-1">
      <defs>
        <linearGradient id="ivory" x2="0" y2="1">
          <stop offset="0" stopColor="#4d4c48" />
          <stop offset="0.120" stopColor="#aeaca2" />
          <stop offset="0.300" stopColor="#c6c4b9" />
          <stop offset="1" stopColor="#d0cfc8" />
        </linearGradient>
        <linearGradient id="ebony" x2="0" y2="1">
          <stop offset="0" stopColor="#2a2a2a" />
          <stop offset="0.500" stopColor="#636363" />
          <stop offset="1" stopColor="#454545" />
        </linearGradient>
      </defs>
      <rect width="660" height="114" fill="#0e0e0d" />
      {Array.from({ length: 36 }, (_, i) => (
        <rect key={i} x={i * 18.333 + 0.600} y="1" width="17.200" height="112" fill="url(#ivory)" />
      ))}
      {[0, 1, 2, 3, 4].map((octave) =>
        blackOffsets.map((offset) => (
          <g key={`${octave}-${offset}`} transform={`translate(${octave * OCTAVE + offset - 6.300} 0)`}>
            <rect width="12.600" height="74" fill="#0a0a0a" />
            <rect x="3.300" y="1" width="6" height="67" fill="url(#ebony)" />
            <rect x="1" y="71" width="10.600" height="2" fill="#333" />
          </g>
        )),
      )}
    </svg>
  );
}

function KeyboardSection() {
  return (
    <div className="flex h-[114px] shrink-0 bg-[#1a1918] text-[7px] text-[#9e9b95]">
      <div className="flex w-[17px] shrink-0 flex-col gap-px py-3 pb-1">
        <button className="flex h-[38px] items-center justify-center bg-[#262322] text-[#b52a38] [writing-mode:sideways-lr]">KEYS</button>
        <button className="flex h-[38px] items-center justify-center bg-[#33302d] [writing-mode:sideways-lr]">EFFECTS</button>
        <button aria-label="Effects power" className="flex flex-1 flex-col items-center justify-center gap-0.5 bg-[#262322]">
          <span className="size-1 rounded-full bg-[#ff4a20]" />
          <Power className="size-[7px]" />
        </button>
      </div>
      <div className="mx-[6px] mt-1.5 mb-1 flex w-[44px] shrink-0 flex-col justify-between rounded-md border border-[#93918d] bg-[#2f2d2b] px-1 pt-1">
        <div className="flex justify-between px-0.5">
          <span className="h-[80px] w-2.5 border border-black bg-gradient-to-b from-[#0f0e0d] via-[#45413c] to-[#0f0e0d]" />
          <svg viewBox="0 0 8 80" className="h-20 w-2">
            <path d="M1 51l6 3v2H5z" fill="#b5b2ab" />
            <path d="M1 76h6l-5 3z" fill="#8e2a33" />
          </svg>
          <span className="h-[80px] w-2.5 border border-black bg-gradient-to-b from-[#0f0e0d] via-[#45413c] to-[#0f0e0d]" />
        </div>
        <div className="flex justify-between text-[6px] leading-[11px]"><span className="pl-1">PB</span><span>MOD</span></div>
      </div>
      <PianoKeys />
    </div>
  );
}

function SynthWindow() {
  return (
    <section className="absolute top-[150px] bottom-0 left-[7px] z-20 flex w-[753px] flex-col bg-[#222527]">
      <div className="flex h-[17px] shrink-0 items-center gap-1.5 pl-1.5 text-[9px] text-[#7a0e18]">
        <span>▸</span>
        <span className="size-2 rounded-full border-2 border-[#b00a18]" />
        <span className="text-[8px]"><b className="text-[#a30c18]">Repro-5</b> (untitled project - ZENOTYPE 19)</span>
      </div>
      <div className="ml-0.5 flex min-h-0 flex-1 flex-col border-x-[9px] border-[#6d372c] bg-[#120e0c]">
        <div className="h-[9px] shrink-0 bg-gradient-to-b from-[#7d4334] to-[#5c2c22]" />
        <SynthPanel />
        <PresetBrowser />
        <div className="relative h-[23px] shrink-0 border-b border-black bg-gradient-to-b from-[#83493c] via-[#6b372c] to-[#4a221b]">
          <div className="absolute right-8 bottom-0.5 h-[7px] w-[102px] bg-[#6a5a52] text-center text-[7px] leading-[7px] font-bold text-[#1a1412] [clip-path:polygon(4%_0,100%_0,96%_100%,0_100%)] [font-family:'DejaVu_Sans',sans-serif]">
            REPRO-5
          </div>
        </div>
        <KeyboardSection />
      </div>
    </section>
  );
}

/* ---------- playlist ---------- */

function Playlist() {
  return (
    <main className="flex min-w-0 flex-1 flex-col">
      <div className="flex h-4 shrink-0 items-center bg-[#272a2b] text-[9px] text-[#6f0d16]">
        <span className="flex w-[172px] items-center gap-2 pl-[18px]">
          <Magnet className="size-2.5 -rotate-45 text-[#3f9c80]" strokeWidth={3} />
          <Pencil className="ml-2 size-2" />
          <Wrench className="-ml-1 size-2.5 text-[#3f7f9c]" />
          <Activity className="size-2" /><Plug className="size-2" /><Scissors className="size-2" /><Square className="size-2" />
        </span>
        <Volume2 className="mr-2 ml-0.5 size-3 text-[#88a030]" />
        Playlist - Arrangement &nbsp;›&nbsp; Pattern 1
        <span className="mr-2 ml-auto">_ ❐ ✕</span>
      </div>
      <div className="flex min-h-0 flex-1">
        <PatternPicker />
        <section className="relative flex min-w-0 flex-1 flex-col bg-[#1d2324]">
          <div className="flex h-[15px] shrink-0 items-start bg-[#1f2123]">
            <div className="ml-[74px] h-[5px] flex-1 border-t-2 border-[#313436] bg-[#2b2e30]">
              <div className="ml-4 h-[2px] w-[170px] bg-gradient-to-r from-[#8d8a9b] from-68% via-[#b00a18] via-70% to-[#6d6a7b] to-72%" />
            </div>
            <div className="ml-[72px] h-3 w-[13px] bg-[#303335] text-center text-[8px] leading-3 text-[#85888a]">›</div>
            <div className="h-3 w-[13px] bg-[#262829]" />
          </div>
          <div className="flex min-h-0 flex-1">
            <div className="flex min-w-0 flex-1 flex-col">
              <div className="h-3 shrink-0 bg-[#07080a] pr-1 text-right text-[7px] leading-3 text-[#a9acad]">20</div>
              <svg className="min-h-0 w-full flex-1">
                <defs>
                  <pattern id="bars" width="95.200" height="600" patternUnits="userSpaceOnUse" x="32">
                    <rect width="95.200" height="600" fill="#1d2425" />
                    <rect width="47.600" height="600" fill="#1a2021" />
                    {Array.from({ length: 8 }, (_, i) => (
                      <rect key={i} x={i * 11.900} width="1" height="600" fill={i % 4 ? '#171c1d' : '#101415'} />
                    ))}
                  </pattern>
                  <pattern id="tracks" width="10" height="37.360" patternUnits="userSpaceOnUse" y="0">
                    <rect width="10" height="1.500" fill="#0c0f10" />
                  </pattern>
                </defs>
                <rect width="100%" height="100%" fill="url(#bars)" />
                <rect width="100%" height="100%" fill="url(#tracks)" />
              </svg>
            </div>
            <div className="flex w-[13px] shrink-0 flex-col bg-[#1d1f20]">
              <span className="mt-0.5 h-8 bg-[#303334]" />
              <span className="mt-auto h-3.5 bg-[#292c2d] text-center text-[8px] text-[#555]">⌄</span>
            </div>
          </div>
          <ChannelRack />
          <SynthWindow />
        </section>
      </div>
    </main>
  );
}

/* ---------- stream overlay ---------- */

function ChatOverlay() {
  return (
    <ul className="pointer-events-none absolute top-[183px] left-[900px] z-30 grid h-[310px] auto-rows-fr text-[11px] leading-5 font-bold [font-family:'Roboto',sans-serif] [text-shadow:0_0_2px_#000]">
      {chat.map((line, i) => (
        <li key={i} className="flex items-center whitespace-nowrap">
          <span className={`flex w-[106px] shrink-0 items-center justify-end gap-0.5 text-xs leading-5 font-medium ${line.user === 'berox' ? 'text-[#b7cdf5]' : 'text-[#4be0b0]'}`}>
            {line.user === 'prodbySHREDDED' && (
              <svg viewBox="0 0 6 12" className="h-3 w-1.5 shrink-0">
                <rect width="6" height="10" rx="3" fill="#7a1fc0" />
                <rect x="1.500" y="1" width="3" height="6" rx="1.500" fill="#d65ae8" />
                <rect x="2" y="9" width="2" height="3" fill="#5b1595" />
              </svg>
            )}
            {line.user}
          </span>
          {line.text && <span className="ml-1 text-white">{line.text}</span>}
          {line.extra === 'emote' && (
            <svg viewBox="0 0 15 15" className="ml-1.5 size-[15px]">
              <rect width="15" height="12" fill="#1c7a2a" />
              <rect x="8" width="7" height="12" fill="#121212" />
              <circle cx="7.500" cy="6.500" r="6" fill="#f3eee6" />
              <circle cx="7.500" cy="5.500" r="4.500" fill="#d9141c" />
              <circle cx="6" cy="4.500" r="0.800" /><circle cx="9" cy="4.500" r="0.800" />
              <rect y="11" width="15" height="4" fill="#a9b0b4" />
            </svg>
          )}
          {line.extra === 'glitch' && (
            <span className="flex items-center text-[13px] text-[#e01020]">
              <svg viewBox="0 0 8 8" className="size-2"><path d="M0 1h8M0 4h8M0 7h8" stroke="#85898c" /></svg>
              IC
            </span>
          )}
        </li>
      ))}
    </ul>
  );
}

/* ---------- taskbar ---------- */

function AppIcon({ label, children, active = false, running = false }: { label: string; children: ReactNode; active?: boolean; running?: boolean }) {
  return (
    <button aria-label={label} className={`relative flex h-7 w-[25px] items-center justify-center rounded ${active ? 'bg-[#54303a]' : ''}`}>
      {children}
      {active && <span className="absolute bottom-0 h-0.5 w-2.5 rounded bg-[#e39ad0]" />}
      {running && <span className="absolute bottom-0 h-0.5 w-1 rounded bg-[#a08a8d]" />}
    </button>
  );
}

function Taskbar() {
  return (
    <footer className="grid h-8 shrink-0 grid-cols-[1fr_auto_1fr] items-center border-t border-[#3d3436] bg-gradient-to-r from-[#222020] from-20% via-[#38151b] via-50% to-[#212021] to-78% text-white [font-family:'Open_Sans',sans-serif]">
      <div className="flex items-center gap-1.5 pl-3">
        <svg viewBox="0 0 16 16" className="size-4">
          <path d="M4 10a3.500 3.500 0 010-7 4.500 4.500 0 018 1.500 3 3 0 010 5.500z" fill="#c7d3ef" />
          <path d="M4 10.500l1.500 3M5.500 10.500L4 13.500M3 12h3.500M10 9.500l1.500 3M11.500 9.500l-1.500 3M9 11h3.500M7.500 12l1 2" stroke="#3f8fe8" strokeWidth="1.300" />
        </svg>
        <p className="text-[8px] leading-[10px]">-1°C<br /><span className="text-[#c4c4c4]">Sníh</span></p>
      </div>
      <div className="flex items-center gap-1">
        <AppIcon label="Start">
          <svg viewBox="0 0 16 16" className="size-4"><path d="M0 0h7.600v7.600H0zM8.400 0H16v7.600H8.400zM0 8.400h7.600V16H0zM8.400 8.400H16V16H8.400z" fill="#4cc2f1" /></svg>
        </AppIcon>
        <label className="mr-1 flex h-[22px] w-[147px] items-center gap-2 rounded-full bg-[#54323a] pl-2">
          <Search className="size-2.5" strokeWidth={3} />
          <input aria-label="Search" placeholder="Hledat" className="w-full bg-transparent text-[9px] outline-none placeholder:text-[#d8cdcf]" />
        </label>
        <AppIcon label="Task view">
          <svg viewBox="0 0 16 16" className="size-4"><rect x="4" y="1" width="12" height="10" fill="#eee" /><rect y="5" width="11" height="10" fill="#777" opacity="0.900" /></svg>
        </AppIcon>
        <AppIcon label="Explorer">
          <svg viewBox="0 0 16 16" className="size-4"><path d="M0 1h6l2 2h8v12H0z" fill="#f2b82c" /><path d="M0 5h16v10H0z" fill="#fbd35a" /><path d="M3 10h10v5H3z" fill="#2b83cf" /></svg>
        </AppIcon>
        <AppIcon label="Store">
          <svg viewBox="0 0 16 16" className="size-4">
            <path d="M5 4V1h6v3" fill="none" stroke="#5fa8dc" />
            <rect y="4" width="16" height="12" rx="2" fill="#f1f1f1" />
            <path d="M5 6h3v3H5z" fill="#e8502a" /><path d="M8.500 6h3v3h-3z" fill="#76b82a" /><path d="M5 9.500h3v3H5z" fill="#2a8fe0" /><path d="M8.500 9.500h3v3h-3z" fill="#f0b422" />
          </svg>
        </AppIcon>
        <AppIcon label="Chrome" running>
          <svg viewBox="0 0 16 16" className="size-4">
            <path d="M8 8L1.070 4A8 8 0 0114.930 4z" fill="#e33b2e" />
            <path d="M8 8l6.930-4A8 8 0 018 16z" fill="#f9c22b" />
            <path d="M8 8v8A8 8 0 011.070 4z" fill="#2f9e4f" />
            <circle cx="8" cy="8" r="3.800" fill="#fff" /><circle cx="8" cy="8" r="3" fill="#3f7fe8" />
          </svg>
        </AppIcon>
        <AppIcon label="Discord"><span className="flex size-4 items-center justify-center rounded-full bg-[#5865f2]"><FaDiscord className="size-2.5" /></span></AppIcon>
        <AppIcon label="Premiere"><span className="size-[15px] rounded-sm bg-[#00005b] text-center text-[8px] leading-[14px] font-bold text-[#a9a0ff]">Pr</span></AppIcon>
        <AppIcon label="Photoshop"><span className="size-[15px] rounded-sm bg-[#001e36] text-center text-[8px] leading-[14px] font-bold text-[#31a8ff]">Ps</span></AppIcon>
        <AppIcon label="Notion"><span className="size-4 rounded-sm border border-[#ddd] bg-[#111] text-center text-[11px] leading-[14px] font-bold [font-family:'Liberation_Serif',serif]">N</span></AppIcon>
        <AppIcon label="Calculator"><Calculator className="size-4 fill-[#2c6c94] text-[#b5d6e8]" /></AppIcon>
        <AppIcon label="FL Studio" active>
          <svg viewBox="0 0 16 16" className="size-4">
            <circle cx="8" cy="8" r="7.500" fill="#3a3433" />
            <path d="M5 6c2-2 5-1 6 1 0 3-2 6-4 8-2-3-3-6-2-9z" fill="#f58a1f" />
            <path d="M7 5C6 2 8 1 8.500 0c1 2 2 3 1 5z" fill="#58b530" />
          </svg>
        </AppIcon>
        <AppIcon label="Instagram"><span className="flex size-4 items-center justify-center rounded bg-gradient-to-tr from-[#fba72c] via-[#e5315f] to-[#7a35d0]"><FaInstagram className="size-3" /></span></AppIcon>
        <AppIcon label="OBS" running>
          <svg viewBox="0 0 18 18" className="size-[18px]">
            <circle cx="8" cy="10" r="7" fill="#26262a" stroke="#c9c9c9" />
            <path d="M8 10c-3 0-3-4 0-5M8 10c1.500 2.600 5 .6 4.500-2.500M8 10c-1.500 2.600-5 2.600-5 0" fill="none" stroke="#c9c9c9" strokeWidth="1.500" />
            <circle cx="14" cy="4" r="4" fill="#e8060c" />
          </svg>
        </AppIcon>
        <AppIcon label="Spotify" running><FaSpotify className="size-4 text-[#1ed760]" /></AppIcon>
      </div>
      <div className="flex items-center justify-end gap-[9px] pr-3 text-[#d6d6d6]">
        <ChevronUp className="size-3" />
        <CloudOff className="size-3" />
        <span className="relative"><RefreshCw className="size-3" /><span className="absolute right-0 bottom-0 size-1.5 rounded-full bg-[#2a8fe0]" /></span>
        <Mic className="size-3 text-[#b99ac0]" />
        <span className="flex gap-1"><Monitor className="size-3" /><Volume2 className="size-3" /></span>
        <p className="text-right text-[8px] leading-[10px] text-white">22:04<br />18.02.2026</p>
      </div>
    </footer>
  );
}

export default function App() {
  return (
    <div className="relative flex h-screen flex-col overflow-hidden bg-[#1d2021] [font-family:'Lato',sans-serif]">
      <Toolbar />
      <div className="flex min-h-0 flex-1">
        <Browser />
        <Playlist />
      </div>
      <Taskbar />
      <ChatOverlay />
      {/* mouse pointer */}
      <svg viewBox="0 0 10 14" className="pointer-events-none absolute top-[431px] left-[752px] z-40 h-3.5 w-2.5">
        <path d="M1 0v11l2.500-2.300L5.500 13l2-1-2-4H9z" fill="#fff" stroke="#222" strokeWidth="0.500" />
      </svg>
    </div>
  );
}
